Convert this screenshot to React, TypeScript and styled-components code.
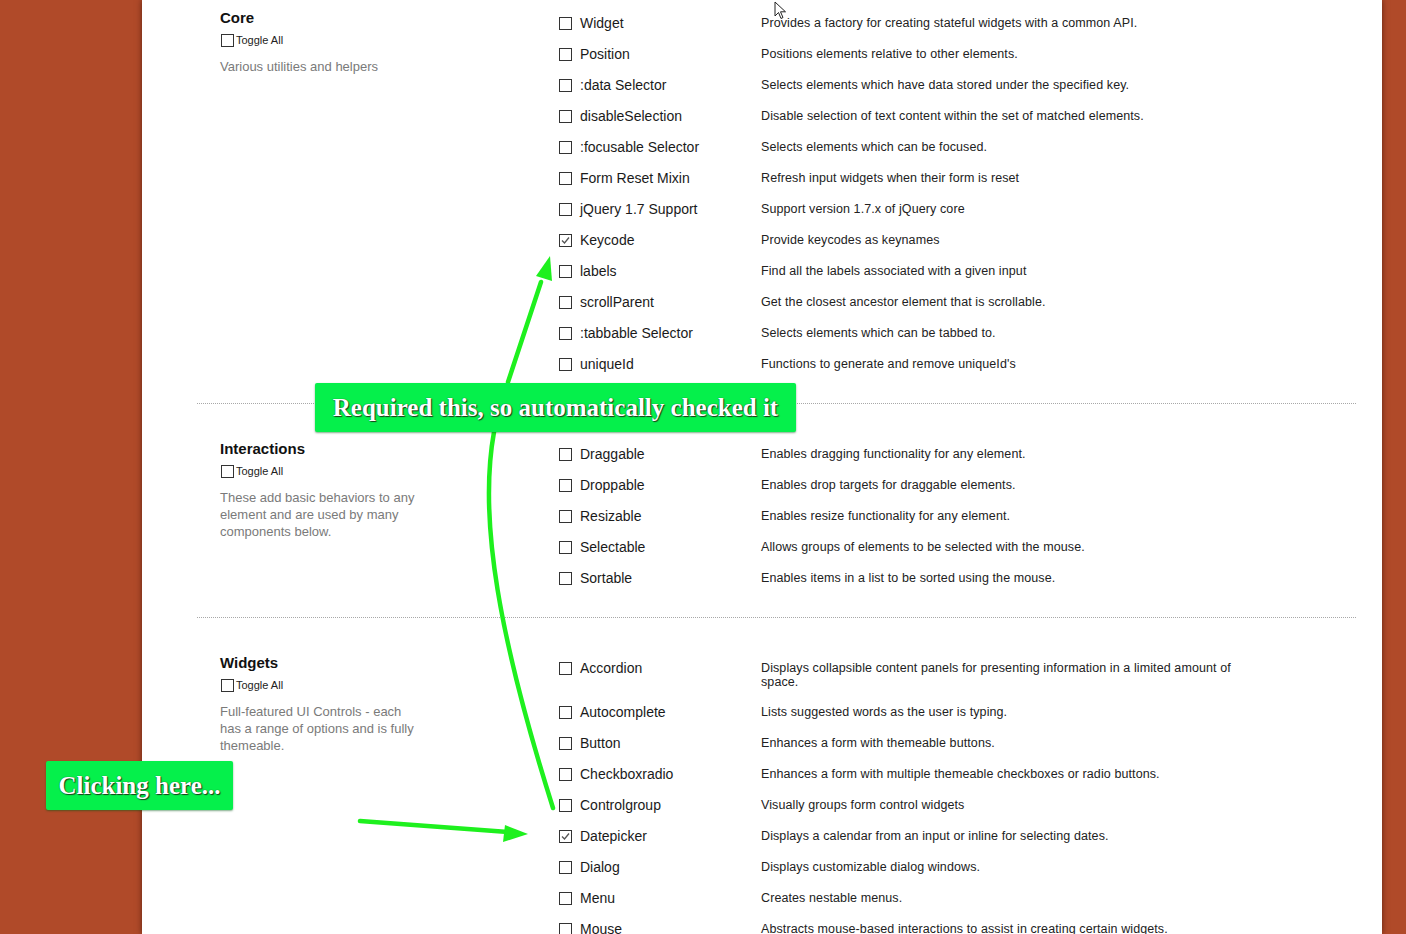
import React from 'react'
import styled, { createGlobalStyle } from 'styled-components'

type Item = { name: string; desc: string; checked?: boolean }
type Group = { title: string; blurb: string; items: Item[] }

const groups: Group[] = [
  {
    title: 'Core',
    blurb: 'Various utilities and helpers',
    items: [
      { name: 'Widget', desc: 'Provides a factory for creating stateful widgets with a common API.' },
      { name: 'Position', desc: 'Positions elements relative to other elements.' },
      { name: ':data Selector', desc: 'Selects elements which have data stored under the specified key.' },
      { name: 'disableSelection', desc: 'Disable selection of text content within the set of matched elements.' },
      { name: ':focusable Selector', desc: 'Selects elements which can be focused.' },
      { name: 'Form Reset Mixin', desc: 'Refresh input widgets when their form is reset' },
      { name: 'jQuery 1.7 Support', desc: 'Support version 1.7.x of jQuery core' },
      { name: 'Keycode', desc: 'Provide keycodes as keynames', checked: true },
      { name: 'labels', desc: 'Find all the labels associated with a given input' },
      { name: 'scrollParent', desc: 'Get the closest ancestor element that is scrollable.' },
      { name: ':tabbable Selector', desc: 'Selects elements which can be tabbed to.' },
      { name: 'uniqueId', desc: "Functions to generate and remove uniqueId's" },
    ],
  },
  {
    title: 'Interactions',
    blurb: 'These add basic behaviors to any element and are used by many components below.',
    items: [
      { name: 'Draggable', desc: 'Enables dragging functionality for any element.' },
      { name: 'Droppable', desc: 'Enables drop targets for draggable elements.' },
      { name: 'Resizable', desc: 'Enables resize functionality for any element.' },
      { name: 'Selectable', desc: 'Allows groups of elements to be selected with the mouse.' },
      { name: 'Sortable', desc: 'Enables items in a list to be sorted using the mouse.' },
    ],
  },
  {
    title: 'Widgets',
    blurb: 'Full-featured UI Controls - each has a range of options and is fully themeable.',
    items: [
      { name: 'Accordion', desc: 'Displays collapsible content panels for presenting information in a limited amount of space.' },
      { name: 'Autocomplete', desc: 'Lists suggested words as the user is typing.' },
      { name: 'Button', desc: 'Enhances a form with themeable buttons.' },
      { name: 'Checkboxradio', desc: 'Enhances a form with multiple themeable checkboxes or radio buttons.' },
      { name: 'Controlgroup', desc: 'Visually groups form control widgets' },
      { name: 'Datepicker', desc: 'Displays a calendar from an input or inline for selecting dates.', checked: true },
      { name: 'Dialog', desc: 'Displays customizable dialog windows.' },
      { name: 'Menu', desc: 'Creates nestable menus.' },
      { name: 'Mouse', desc: 'Abstracts mouse-based interactions to assist in creating certain widgets.' },
    ],
  },
]

const Check: React.FC<{ checked?: boolean }> = ({ checked }) => (
  <Box>
    {checked && (
      <svg width='11' height='11' viewBox='0 0 11 11'>
        <path d='M2 5.5 L4.5 8 L9 2.5' fill='none' stroke='#555' strokeWidth='1.3' />
      </svg>
    )}
  </Box>
)

const App: React.FC = () => {
  return (
    <>
      <GlobalStyle />
      <Page>
        <Sheet>
          {groups.map((g, i) => (
            <React.Fragment key={g.title}>
              {i > 0 && <Divider />}
              <Section $first={i === 0}>
                <Side>
                  <Heading>{g.title}</Heading>
                  <ToggleAll>
                    <Check />
                    <span>Toggle All</span>
                  </ToggleAll>
                  <Blurb>{g.blurb}</Blurb>
                </Side>
                <List>
                  {g.items.map((it) => (
                    <Row key={it.name}>
                      <Name>
                        <Check checked={it.checked} />
                        <span>{it.name}</span>
                      </Name>
                      <Desc>{it.desc}</Desc>
                    </Row>
                  ))}
                </List>
              </Section>
            </React.Fragment>
          ))}
        </Sheet>

        <Arrows width='1406' height='934' viewBox='0 0 1406 934'>
          <g stroke='#1ef01e' strokeWidth='4.5' fill='none' strokeLinecap='round'>
            <path d='M508 382 L541 282' />
            <path d='M494 432 C478 520 500 640 553 808' />
            <path d='M360 821 L508 832' />
          </g>
          <g fill='#1ef01e'>
            <polygon points='550,256 536,276 552,281' />
            <polygon points='528,834 505,825 503,842' />
          </g>
        </Arrows>

        <Callout $left={315} $top={383} $width={481}>Required this, so automatically checked it</Callout>
        <Callout $left={46} $top={761} $width={187}>Clicking here...</Callout>

        <Cursor width='13' height='20' viewBox='0 0 13 20'>
          <path d='M1 1 L1 15 L4.5 11.5 L7 17.5 L9 16.5 L6.5 10.8 L11.5 10.8 Z' fill='#fff' stroke='#222' strokeWidth='1' />
        </Cursor>
      </Page>
    </>
  )
}
export default App

const GlobalStyle = createGlobalStyle`
  html, body {
    margin: 0;
    padding: 0;
    height: 934px;
    overflow: hidden;
  }
  body {
    font-family: 'Liberation Sans', Arial, sans-serif;
    color: #222;
  }
`

const Page = styled.div`
  position: relative;
  width: 1406px;
  height: 934px;
  overflow: hidden;
  background: #b04a29;
`

const Sheet = styled.div`
  margin-left: 142px;
  width: 1240px;
  height: 934px;
  background: #fff;
  box-shadow: 0 0 6px rgba(40, 10, 0, 0.6);
  padding-top: 8px;
  box-sizing: border-box;
`

const Section = styled.section<{ $first?: boolean }>`
  display: grid;
  grid-template-columns: 339px 1fr;
  padding: ${({ $first }) => ($first ? '0' : '35px')} 0 23px 78px;
`

const Divider = styled.div`
  margin: 0 26px 0 55px;
  border-top: 1px dotted #a8a8a8;
`

const Side = styled.div`
  padding-top: 1px;
`

const Heading = styled.h3`
  margin: 0;
  font-size: 15px;
  line-height: 18px;
  font-weight: bold;
  color: #111;
`

const ToggleAll = styled.label`
  display: flex;
  align-items: flex-end;
  gap: 2px;
  margin-top: 7px;
  margin-left: 1px;
  font-size: 11px;
  line-height: 13px;
  color: #222;
`

const Blurb = styled.p`
  margin: 11px 0 0;
  width: 205px;
  font-size: 13px;
  line-height: 17px;
  color: #7a7a7a;
`

const List = styled.div`
  display: flex;
  flex-direction: column;
`

const Row = styled.div`
  display: grid;
  grid-template-columns: 202px 478px;
  align-items: start;
  padding: 8px 0;
`

const Name = styled.label`
  display: flex;
  align-items: center;
  gap: 8px;
  font-size: 14px;
  line-height: 15px;
  color: #1a1a1a;
`

const Desc = styled.div`
  font-size: 12.5px;
  letter-spacing: 0.1px;
  line-height: 14px;
  color: #222;
`

const Box = styled.span`
  display: inline-flex;
  align-items: center;
  justify-content: center;
  width: 11px;
  height: 11px;
  border: 1px solid #333;
  background: #fff;
  flex: none;
`

const Arrows = styled.svg`
  position: absolute;
  left: 0;
  top: 0;
  pointer-events: none;
`

const Callout = styled.div<{ $left: number; $top: number; $width: number }>`
  position: absolute;
  left: ${({ $left }) => $left}px;
  top: ${({ $top }) => $top}px;
  width: ${({ $width }) => $width}px;
  height: 49px;
  display: flex;
  align-items: center;
  justify-content: center;
  background: #05f04b;
  border-radius: 2px;
  box-shadow: 0 1px 2px rgba(0, 90, 20, 0.5);
  font-family: 'Liberation Serif', 'Times New Roman', serif;
  font-weight: bold;
  font-size: 25px;
  color: #fff;
  text-shadow: 0 0 1px #1b3d1b, 1px 1px 1px #1b3d1b;
  white-space: nowrap;
`

const Cursor = styled.svg`
  position: absolute;
  left: 774px;
  top: 1px;
`
